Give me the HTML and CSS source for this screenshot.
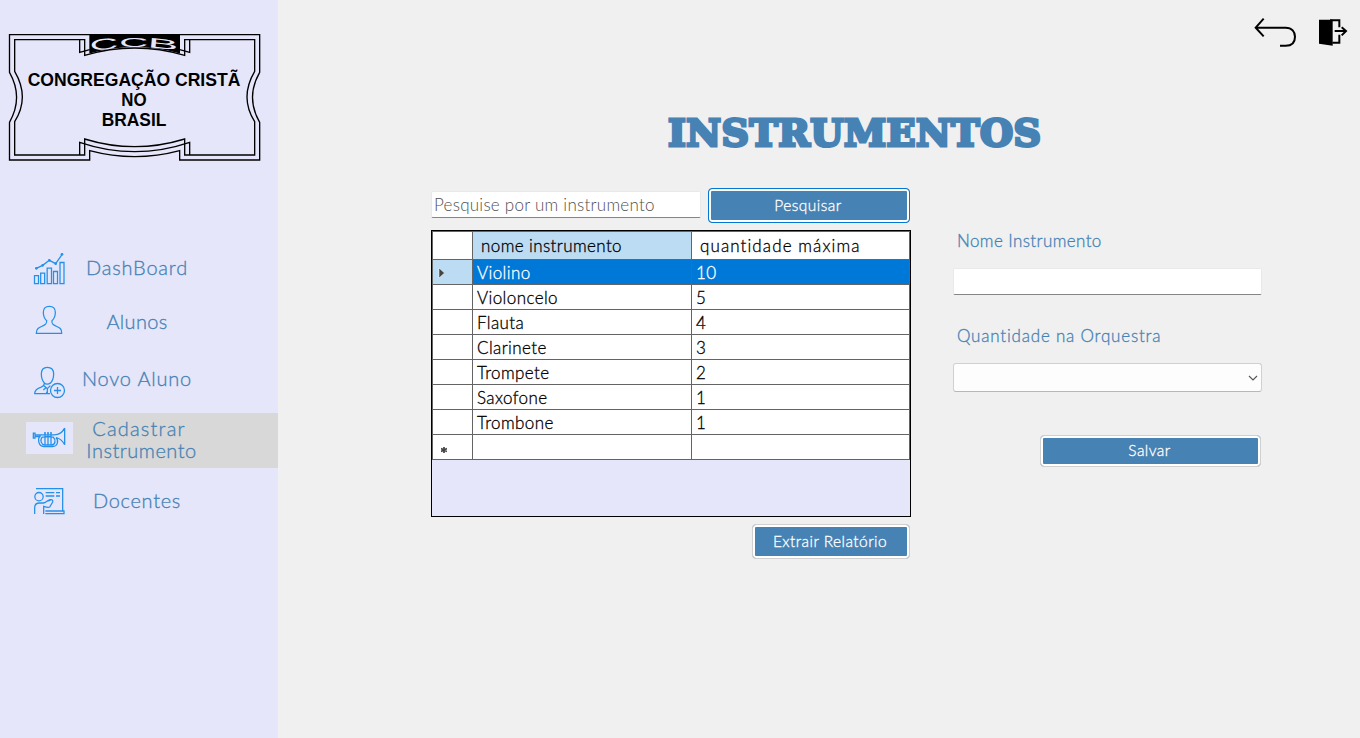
FILE: index.html
```html
<!DOCTYPE html>
<html lang="pt-BR">
<head>
<meta charset="utf-8">
<title>Instrumentos</title>
<link rel="stylesheet" href="styles.css">
</head>
<body>
<div class="app">
  <aside class="sidebar">
    <svg class="logo" viewBox="0 0 834 450" fill="none" stroke="#000" stroke-width="4">
      <path d="M28.500 44H779V157Q736 232 779 307V420H539V392Q404 428 269 392V420H28.500V307Q71 232 28.500 157Z"/>
      <path d="M254 59H44V154Q90 232 44 305V405H254V357Q404 403 554 357V405H764V305Q718 232 764 154V59H554V106Q404 62 254 106Z"/>
      <path d="M239 405V367Q404 423 569 367V405M239 59V97L269 89M569 59V97L539 89"/>
      <path d="M270 44H538V98Q404 60 270 98Z" fill="#000"/>
      <g class="logo-mark">
        <text transform="translate(271 92) rotate(-5) scale(2.500 .98)">C</text>
        <text transform="translate(358 82) scale(2.550 .85)">C</text>
        <text transform="translate(442 81) rotate(6) scale(2.950 .88)">B</text>
      </g>
      <g class="logo-name">
        <text x="402" y="197" textLength="638" lengthAdjust="spacingAndGlyphs">CONGREGAÇÃO CRISTÃ</text>
        <text x="402" y="257" textLength="76" lengthAdjust="spacingAndGlyphs">NO</text>
        <text x="402" y="317" textLength="194" lengthAdjust="spacingAndGlyphs">BRASIL</text>
      </g>
    </svg>
    <nav class="menu">
      <a class="item">
        <svg class="icon" viewBox="78 36 141 96"><path d="M103.500 107h12v24h-12zM122 99.500h12V131h-12zM141.500 84.500h13V131h-13zM160.500 94.500h12V131h-12zM180 67.500h12V131h-12z"/><path d="M109 85l19-9 20-15 19 10 19-27"/><g class="dots"><circle cx="109" cy="85" r="4"/><circle cx="128" cy="76" r="4"/><circle cx="148" cy="61" r="4"/><circle cx="167" cy="71" r="4"/><circle cx="186" cy="43" r="4"/></g></svg>
        <span class="label dash">DashBoard</span>
      </a>
      <a class="item">
        <svg class="icon" viewBox="78 198 141 96"><path d="M109 280H185C186 264 176 262 165 257C156 253 155 250 156 242C162 237 166 228 166 217C166 205 159 199 148 199C137 199 130 205 130 217C130 228 134 237 140 242C140 250 139 253 130 257C119 262 109 264 109 280Z"/></svg>
        <span class="label alunos">Alunos</span>
      </a>
      <a class="item novo-row">
        <svg class="icon" viewBox="78 369 141 96"><path d="M150 461H104C104 450 110 446 122 442C132 438 133 435 133 429C127 422 124 412 124 402C124 388 131 382 142 382C154 382 161 389 161 402C161 413 158 423 150 431M133 429C137 433 146 434 150 429M132 437L142 446L151 437M137 444L130 450M142 446V461L139 455"/><circle cx="172.500" cy="451.500" r="21"/><path d="M172.500 441v21M162 451.500h21"/></svg>
        <span class="label novo">Novo Aluno</span>
      </a>
      <a class="item active">
        <svg class="icon boxed" viewBox="78 66 141 95"><path d="M100 99h5v15h-5zM105 104h26M105 109h17M121 105C111 118 116 139 131 139H158C173 139 177 121 168 112M126 111C119 122 125 134 133 134H155C166 134 169 119 160 111Q143 107 126 111M131 104H163C179 104 188 95 194 84V134C188 122 179 115 169 112M135 99v35M144 99v35M153 99v35M132 98h6M141 98h6M150 98h6"/></svg>
        <span class="label"><span class="cad">Cadastrar</span><span class="instr">Instrumento</span></span>
      </a>
      <a class="item doc-row">
        <svg class="icon" viewBox="78 255 141 96"><circle cx="117" cy="290" r="12.500"/><path d="M108 266H188V332M104 342V323C104 314 110 309 119 309H130C135 309 139 306 143 302L150 299Q160 298 158 306L149 321Q145 324 131 319V342M142 303Q151 302 153 299M137 278h26M168 278h12M137 288h26M168 288h12M136 333H192V341H136"/></svg>
        <span class="label doc">Docentes</span>
      </a>
    </nav>
  </aside>
  <main class="main">
    <div class="toolbar">
      <svg class="back" viewBox="42 36 129 96"><path d="M71 41L47 68L71 94M47 68H137C156 68 165 81 165 95C165 111 156 122 137 122H120"/></svg>
      <svg class="exit" viewBox="234 40 90 90"><path d="M237 45H278V123L237 117Z" fill="#000" stroke="none"/><path d="M270 47H298V68M298 90V114H277M284 79H317M305 68L318 79L305 92" fill="none" stroke="#000" stroke-width="6"/></svg>
    </div>
    <h1 class="title"><span>INSTRUMENTOS</span></h1>
    <div class="content">
      <section class="list">
        <div class="search">
          <input class="field search-field" type="text" placeholder="Pesquise por um instrumento">
          <button class="btn focused">Pesquisar</button>
        </div>
        <div class="grid-box">
          <div class="grid">
            <div class="c sel"></div><div class="c head sel h1c">nome instrumento</div><div class="c head h2c">quantidade máxima</div>
            <div class="c sel mark"><svg width="8" height="12" viewBox="0 0 8 12"><path d="M1 1L6.500 6L1 11Z" fill="#444" stroke="#fff" stroke-width=".5"/></svg></div><div class="c on">Violino</div><div class="c on num">10</div>
            <div class="c"></div><div class="c">Violoncelo</div><div class="c num">5</div>
            <div class="c"></div><div class="c">Flauta</div><div class="c num">4</div>
            <div class="c"></div><div class="c">Clarinete</div><div class="c num">3</div>
            <div class="c"></div><div class="c">Trompete</div><div class="c num">2</div>
            <div class="c"></div><div class="c">Saxofone</div><div class="c num">1</div>
            <div class="c"></div><div class="c">Trombone</div><div class="c num">1</div>
            <div class="c new"><svg width="6" height="6" viewBox="0 0 6 6"><path d="M3 0v6M0 1.500l6 3M0 4.500l6-3" stroke="#444" stroke-width="1.700"/></svg></div><div class="c"></div><div class="c"></div>
          </div>
        </div>
        <button class="btn report">Extrair Relatório</button>
      </section>
      <section class="form">
        <label class="caption name-cap">Nome Instrumento</label>
        <input class="field name-field" type="text">
        <label class="caption qty-cap">Quantidade na Orquestra</label>
        <div class="combo"><svg width="10" height="6" viewBox="0 0 10 6"><path d="M1 1l4 4 4-4" fill="none" stroke="#555" stroke-width="1.100"/></svg></div>
        <button class="btn save">Salvar</button>
      </section>
    </div>
  </main>
</div>
</body>
</html>
```
FILE: styles.css
```css
* { box-sizing: border-box; }
body { margin: 0; font-family: Lato, "Open Sans", sans-serif; font-size: 17px; font-weight: 300; }
.app { display: flex; width: 1360px; height: 738px; background: #f0f0f0; overflow: hidden; }

.sidebar { width: 278px; background: #e6e6fa; padding-top: 20px; }
.logo { display: block; width: 278px; height: 150px; }
.logo-name { font: bold 54px "Liberation Sans", sans-serif; fill: #000; stroke: none; text-anchor: middle; }
.logo-mark { font: 47px "Liberation Sans", sans-serif; fill: #e6e6fa; stroke: none; }
.menu { margin-top: 71px; color: #4682b4; }
.item { display: flex; align-items: center; height: 54px; padding-left: 26px; }
.novo-row { height: 60px; margin-bottom: 4px; }
.active { height: 55px; background: #d8d8d8; }
.doc-row { height: 66px; }
.icon { width: 47px; height: 32px; overflow: visible; fill: none; stroke: #2490ea; stroke-width: 3.8; }
.boxed { background: #e6e6fa; align-self: flex-start; margin-top: 9px; }
.dots { fill: #2490ea; stroke: none; }
.label { width: 128px; text-align: center; font-size: 20px; line-height: 22px; padding-bottom: 2px; white-space: nowrap; }
.label, .c, .caption, .btn { -webkit-text-stroke: .3px currentColor; }
.label span { display: block; }
.active .label { padding-bottom: 3px; }
.dash { letter-spacing: .8px; }
.alunos { letter-spacing: .3px; }
.novo { letter-spacing: .8px; }
.cad { letter-spacing: 1.2px; padding-left: 4px; }
.instr { letter-spacing: .5px; padding-left: 9px; }
.doc { letter-spacing: .7px; }

.main { flex: 1; }
.toolbar { display: flex; justify-content: flex-end; gap: 21px; padding: 17px 12px 0 0; height: 55px; }
.back { width: 43px; height: 32px; fill: none; stroke: #000; stroke-width: 6; }
.exit { width: 30px; height: 30px; margin-top: 1px; }
.title { margin: 53px 0 0 390px; height: 50px; font: bold 38px/50px "DejaVu Serif", serif; color: #4682b4; letter-spacing: .5px; -webkit-text-stroke: 3px #4682b4; white-space: nowrap; }
.content { display: flex; gap: 42px; padding: 30px 0 0 153px; }
.list { width: 480px; }
.search { display: flex; justify-content: space-between; padding: 0 1px 0 0; height: 35px; }
.field { display: block; font: 300 17px Lato, sans-serif; border: 1px solid #e9e9e9; border-bottom: 1px solid #858585; border-radius: 2px; background: #fff; outline: 0; }
.search-field { width: 270px; height: 27px; margin-top: 3px; padding: 0 2px; letter-spacing: .25px; }
.search-field::placeholder { color: #505050; }
.btn { display: block; font: 300 15.5px/1 Lato, sans-serif; color: #fff; background: #4682b4; border: 1px solid #d0d0d0; border-radius: 4px; box-shadow: inset 0 0 0 2px #fff; padding: 0 2px 0 0; letter-spacing: .45px; }
.focused { width: 202px; height: 35px; border-color: #0078d4; }
.grid-box { margin-top: 7px; height: 287px; border: 1px solid #000; background: #e6e6fa; }
.grid { display: grid; grid-template-columns: 40px 219px 218px; grid-template-rows: 28px repeat(8, 25px); border: 1px solid #646464; border-width: 1px 0 0 1px; color: #000; }
.c { border: 1px solid #646464; border-width: 0 1px 1px 0; background: #fff; padding-left: 4px; line-height: 26px; letter-spacing: .4px; white-space: nowrap; }
.head { padding-left: 8px; line-height: 28px; }
.h2c { letter-spacing: 1.1px; }
.h1c { letter-spacing: .4px; }
.sel { background: #bcdcf4; }
.c.sel:first-child { background: #fff; }
.c.on { background: #0078d7; color: #fff; }
.mark, .new { display: flex; align-items: center; }
.mark { padding: 2px 0 0 5px; }
.new { padding: 5px 0 0 8px; }
.report { width: 158px; height: 35px; margin: 7px 1px 0 auto; }

.form { width: 309px; padding-top: 43px; }
.caption { display: block; height: 20px; line-height: 20px; margin-left: 4px; color: #4682b4; letter-spacing: .4px; }
.qty-cap { letter-spacing: .8px; margin-top: 31px; }
.name-field { width: 309px; height: 27px; margin: 17px 0 0; }
.combo { display: flex; align-items: center; justify-content: flex-end; height: 29px; margin-top: 17px; padding-right: 3px; background: #fdfdfd; border: 1px solid #d0d0d0; border-bottom-color: #b8b8b8; border-radius: 3px; }
.save { width: 221px; height: 32px; margin: 43px 1px 0 auto; }
```
